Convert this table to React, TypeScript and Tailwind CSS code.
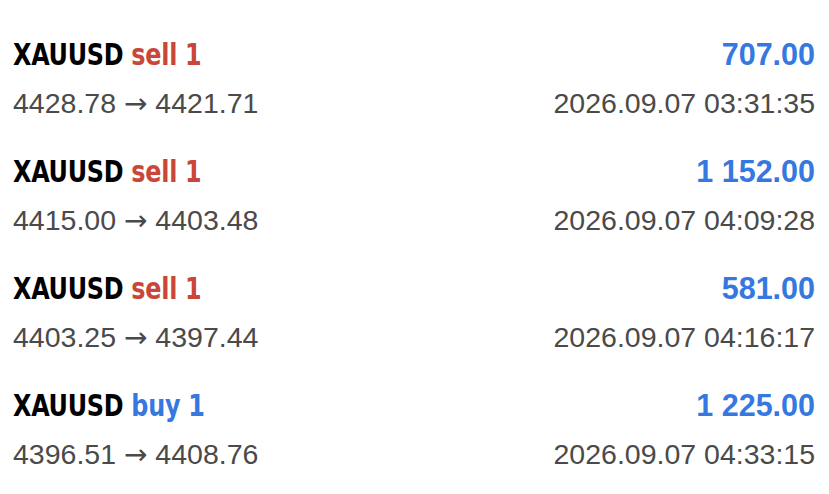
const trades = [
  { side: "sell", open: "4428.78", close: "4421.71", profit: "707.00", time: "2026.09.07 03:31:35" },
  { side: "sell", open: "4415.00", close: "4403.48", profit: "1 152.00", time: "2026.09.07 04:09:28" },
  { side: "sell", open: "4403.25", close: "4397.44", profit: "581.00", time: "2026.09.07 04:16:17" },
  { side: "buy", open: "4396.51", close: "4408.76", profit: "1 225.00", time: "2026.09.07 04:33:15" },
];

const App = () => {
  return (
    <div className="w-[829px] h-[494px] bg-white pt-[35px] font-['Liberation_Sans',Arial,sans-serif]">
      {trades.map((t, i) => (
        <div key={i} className="h-[117px] pl-[13px] pr-[14px]">
          <div className="flex items-center justify-between h-[40px]">
            <div className="text-[30.5px] font-bold font-stretch-condensed tracking-[-0.3px] font-['DejaVu_Sans',sans-serif] scale-x-[0.87] origin-left">
              <span className="text-black">XAUUSD</span>{" "}
              <span className={t.side === "sell" ? "text-[#c9473a]" : "text-[#3478e0]"}>{t.side} 1</span>
            </div>
            <div className="text-[30.5px] font-bold text-[#3478e0]">{t.profit}</div>
          </div>
          <div className="flex items-center justify-between h-[40px] mt-[8px] text-[28.5px] text-[#4a4a4a]">
            <div>
              {t.open} <span className="font-['DejaVu_Sans',sans-serif] text-[28px]">→</span> {t.close}
            </div>
            <div>{t.time}</div>
          </div>
        </div>
      ))}
    </div>
  );
};

export default App;
